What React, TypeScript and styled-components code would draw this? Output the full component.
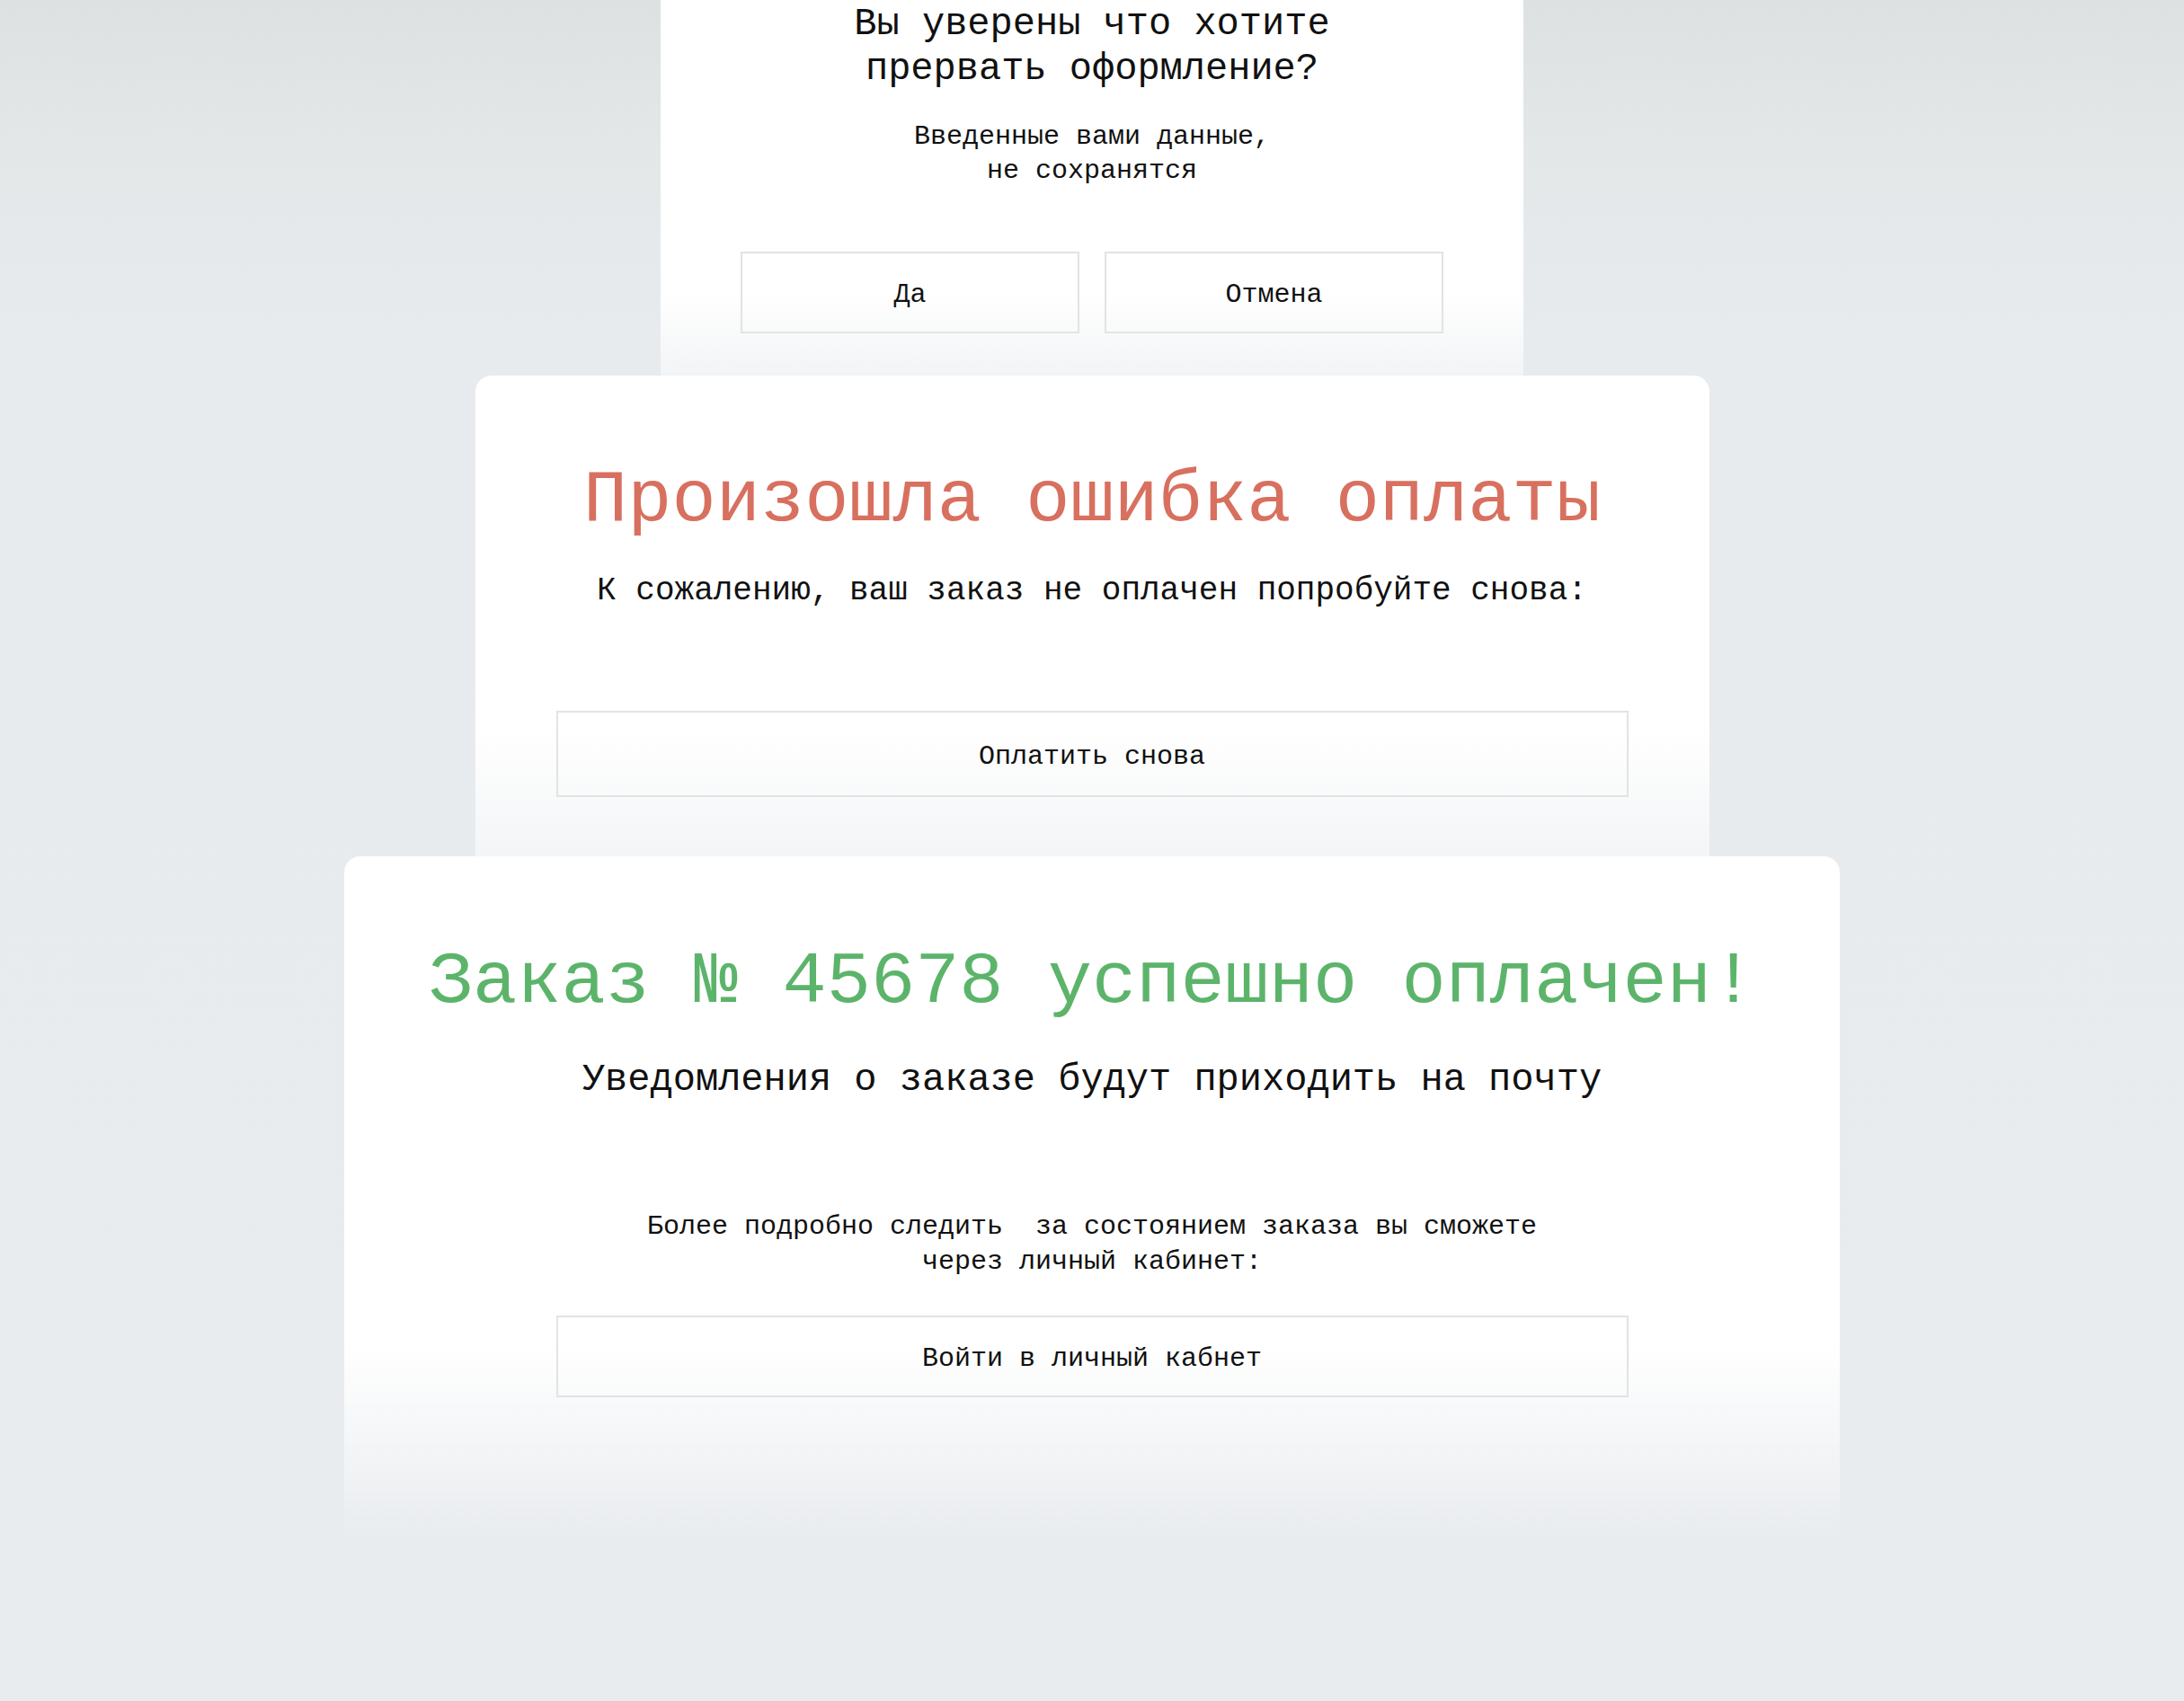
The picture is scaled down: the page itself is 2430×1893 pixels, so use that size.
import React from "react";
import styled, { createGlobalStyle } from "styled-components";

const GlobalStyle = createGlobalStyle`
  html, body {
    margin: 0;
    padding: 0;
  }

  body {
    min-height: 100vh;
    background: linear-gradient(
      180deg,
      #dde1e1 0px,
      #e3e7e8 160px,
      #e8ebee 380px,
      #e9ecef 100%
    );
    font-family: "Liberation Mono", "DejaVu Sans Mono", monospace;
    color: #111;
  }
`;

const Page = styled.main`
  display: flex;
  flex-direction: column;
  align-items: center;
  min-height: 1893px;
`;

const Card = styled.section<{
  $width: number;
  $height: number;
  $pad: number;
  $fade: string;
  $rounded?: boolean;
}>`
  box-sizing: border-box;
  display: flex;
  flex-direction: column;
  align-items: center;
  width: ${(p) => p.$width}px;
  height: ${(p) => p.$height}px;
  padding: ${(p) => p.$pad}px 0 0;
  border-radius: ${(p) => (p.$rounded ? "18px 18px 0 0" : "0")};
  background: ${(p) => p.$fade};
  text-align: center;
`;

const Question = styled.h2`
  margin: 0;
  font-size: 42px;
  line-height: 50px;
  font-weight: 400;
`;

const Title = styled.h1<{ $color: string }>`
  margin: 0;
  font-size: 82px;
  line-height: 98px;
  font-weight: 400;
  color: ${(p) => p.$color};
  white-space: nowrap;
`;

const Lead = styled.p<{ $size: number; $line: number; $top: number }>`
  margin: ${(p) => p.$top}px 0 0;
  font-size: ${(p) => p.$size}px;
  line-height: ${(p) => p.$line}px;
  white-space: nowrap;
`;

const ButtonRow = styled.div`
  display: flex;
  gap: 28px;
  margin-top: 71px;
`;

const Button = styled.button<{ $width: number; $height?: number; $top?: number }>`
  box-sizing: border-box;
  width: ${(p) => p.$width}px;
  height: ${(p) => p.$height ?? 91}px;
  margin-top: ${(p) => p.$top ?? 0}px;
  padding: 5px 0 0;
  border: 2px solid #e2e3e4;
  background: transparent;
  font-family: inherit;
  font-size: 30px;
  color: #111;
  cursor: pointer;
`;

export default function App() {
  return (
    <>
      <GlobalStyle />
      <Page>
        <Card
          $width={960}
          $height={418}
          $pad={2}
          $fade="linear-gradient(180deg, #fff 0, #fff calc(100% - 90px), rgba(255,255,255,0.45) 100%)"
        >
          <Question>
            Вы уверены что хотите
            <br />
            прервать оформление?
          </Question>
          <Lead $size={30} $line={38} $top={31}>
            Введенные вами данные,
            <br />
            не сохранятся
          </Lead>
          <ButtonRow>
            <Button $width={377}>Да</Button>
            <Button $width={377}>Отмена</Button>
          </ButtonRow>
        </Card>

        <Card
          $width={1373}
          $height={535}
          $pad={91}
          $rounded
          $fade="linear-gradient(180deg, #fff 0, #fff calc(100% - 140px), rgba(255,255,255,0.5) 100%)"
        >
          <Title $color="#d8705f">Произошла ошибка оплаты</Title>
          <Lead $size={36} $line={44} $top={29}>
            К сожалению, ваш заказ не оплачен попробуйте снова:
          </Lead>
          <Button $width={1193} $height={96} $top={111}>
            Оплатить снова
          </Button>
        </Card>

        <Card
          $width={1664}
          $height={760}
          $pad={92}
          $rounded
          $fade="linear-gradient(180deg, #fff 0, #fff 72%, rgba(255,255,255,0) 100%)"
        >
          <Title $color="#5cb46b">Заказ № 45678 успешно оплачен!</Title>
          <Lead $size={42} $line={50} $top={34}>
            Уведомления о заказе будут приходить на почту
          </Lead>
          <Lead $size={30} $line={39} $top={119}>
            Более подробно следить&nbsp; за состоянием заказа вы сможете
            <br />
            через личный кабинет:
          </Lead>
          <Button $width={1193} $top={40}>
            Войти в личный кабнет
          </Button>
        </Card>
      </Page>
    </>
  );
}
